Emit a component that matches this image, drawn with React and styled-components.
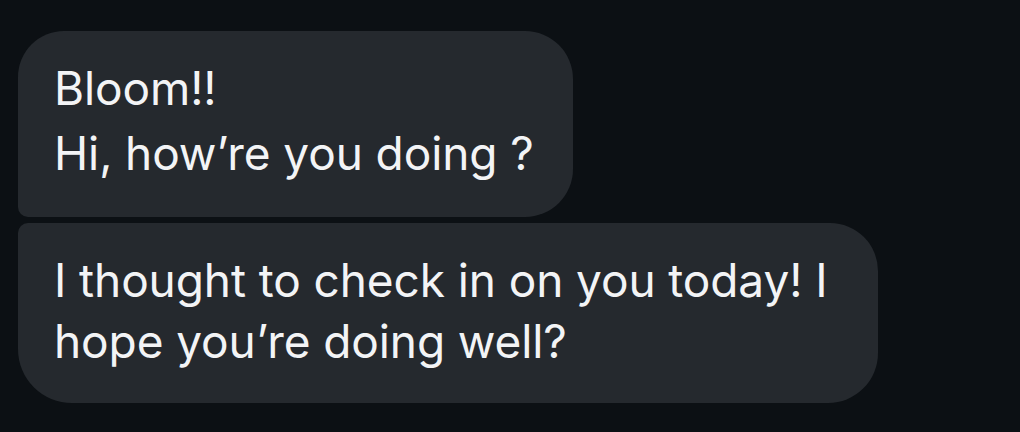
import React from "react"
import styled, { createGlobalStyle } from "styled-components"

const Global = createGlobalStyle`
    html, body {
        margin: 0;
        padding: 0;
        background-color: #0c1014;
    }
    body {
        font-family: Inter, "Liberation Sans", Arial, sans-serif;
        -webkit-font-smoothing: antialiased;
    }
`

const Tela = styled.div`
    width: 1020px;
    height: 432px;
    background-color: #0c1014;
    padding: 31px 0 0 18px;
    box-sizing: border-box;
    display: flex;
    flex-direction: column;
    align-items: flex-start;
    gap: 6px;
`

const Balao = styled.div`
    box-sizing: border-box;
    width: ${props => props.largura}px;
    height: ${props => props.altura}px;
    padding: ${props => props.topo}px 0 0 36px;
    background-color: #25292e;
    color: #f3f4f6;
    font-size: 46px;
    line-height: ${props => props.linha}px;
    letter-spacing: -0.1px;
    border-radius: ${props => props.primeiro ? "46px 48px 48px 10px" : "10px 48px 50px 54px"};
`

export default function App() {
    return <>
        <Global />
        <Tela>
            <Balao primeiro largura={555} altura={186} topo={25} linha={65}>
                Bloom!!<br />
                Hi, how’re you doing ?
            </Balao>
            <Balao largura={860} altura={180} topo={27} linha={61}>
                I thought to check in on you today! I<br />
                hope you’re doing well?
            </Balao>
        </Tela>
    </>
}
